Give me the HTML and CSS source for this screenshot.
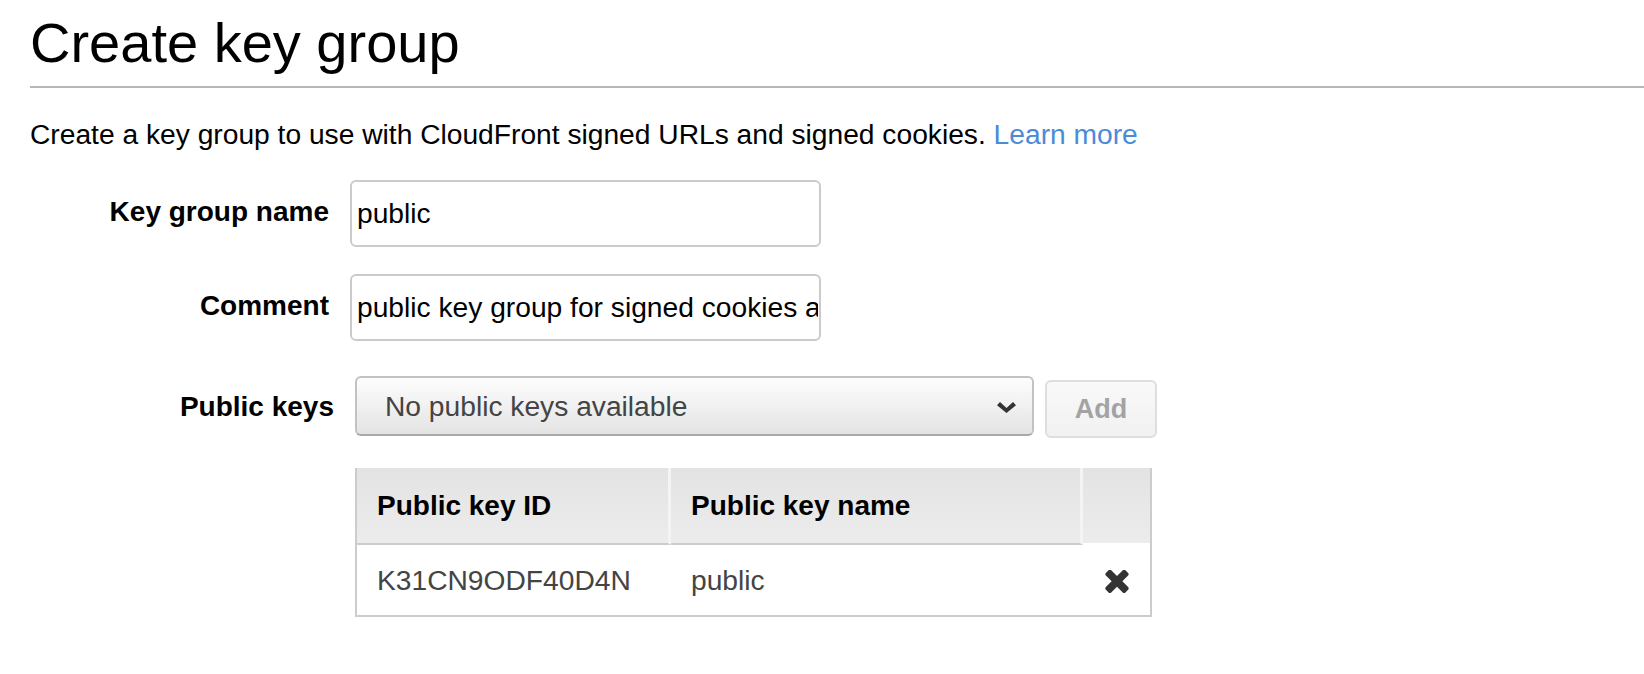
FILE: index.html
```html
<!DOCTYPE html>
<html lang="en">
<head>
<meta charset="utf-8">
<title>Create key group</title>
<link rel="stylesheet" href="styles.css">
</head>
<body>
<div class="page">
  <h1 class="title">Create key group</h1>
  <p class="intro">Create a key group to use with CloudFront signed URLs and signed cookies. <a class="link" href="#">Learn more</a></p>
  <div class="form">
    <div class="row">
      <label class="label">Key group name</label>
      <input class="input" type="text" value="public">
    </div>
    <div class="row row-comment">
      <label class="label">Comment</label>
      <input class="input" type="text" value="public key group for signed cookies and URLs">
    </div>
    <div class="row row-keys">
      <label class="label label-keys">Public keys</label>
      <div class="select">
        <span class="select-text">No public keys available</span>
        <svg class="chevron" width="19" height="11" viewBox="0 0 19 11"><path d="M0 3.2 L3 0 L9.5 6 L16 0 L19 3.2 L9.5 11 Z" fill="#333"/></svg>
      </div>
      <button class="btn-add" type="button" disabled>Add</button>
    </div>
    <div class="keys">
      <div class="keys-head">
        <div class="th th-id">Public key ID</div>
        <div class="th th-name">Public key name</div>
        <div class="th th-action"></div>
      </div>
      <div class="keys-row">
        <div class="td td-id">K31CN9ODF40D4N</div>
        <div class="td td-name">public</div>
        <div class="td td-action">
          <svg class="remove" width="24" height="23" viewBox="110 382 1188 1172"><path d="M1298 1322q0 40-28 68l-136 136q-28 28-68 28t-68-28l-294-294-294 294q-28 28-68 28t-68-28l-136-136q-28-28-28-68t28-68l294-294-294-294q-28-28-28-68t28-68l136-136q28-28 68-28t68 28l294 294 294-294q28-28 68-28t68 28l136 136q28 28 28 68t-28 68l-294 294 294 294q28 28 28 68z" fill="#333"/></svg>
        </div>
      </div>
    </div>
  </div>
</div>
</body>
</html>
```
FILE: styles.css
```css
html, body {
  margin: 0;
  padding: 0;
  background: #ffffff;
}

body {
  font-family: "Liberation Sans", Arial, Helvetica, sans-serif;
  color: #000;
}

.page {
  padding-left: 30px;
}

.title {
  margin: 0;
  padding: 11px 0 11px 0;
  font-size: 56px;
  line-height: 64px;
  font-weight: normal;
  color: #000;
  border-bottom: 2px solid #b7b7b7;
}

.intro {
  margin: 30px 0 0 0;
  font-size: 28.2px;
  line-height: 32px;
  color: #000;
}

.link {
  color: #4a8bd8;
  text-decoration: none;
}

.form {
  margin-top: 30px;
}

.row {
  display: flex;
  align-items: center;
}

.row-comment {
  margin-top: 27px;
}

.row-keys {
  margin-top: 35px;
  align-items: flex-start;
}

.label {
  flex: 0 0 299px;
  margin-right: 21px;
  text-align: right;
  font-size: 28px;
  line-height: 32px;
  font-weight: bold;
  padding-bottom: 3px;
}

.input {
  box-sizing: border-box;
  width: 471px;
  height: 67px;
  margin: 0;
  padding: 0 1px 0 5px;
  border: 2px solid #cbcbcb;
  border-radius: 6px;
  font-family: "Liberation Sans", Arial, Helvetica, sans-serif;
  font-size: 28.2px;
  color: #000;
  background: #fff;
  outline: none;
}

.label-keys {
  flex: 0 0 304px;
  margin-right: 21px;
  height: 60px;
  line-height: 62px;
  padding-bottom: 0;
}

.select {
  box-sizing: border-box;
  width: 679px;
  height: 60px;
  display: flex;
  align-items: center;
  justify-content: space-between;
  padding: 0 16px 0 28px;
  border: 2px solid #c2c2c2;
  border-bottom-color: #a9a9a9;
  border-radius: 6px;
  background: linear-gradient(#fdfdfd, #e4e4e4);
}

.select-text {
  font-size: 28.2px;
  line-height: 32px;
  color: #444;
}

.chevron {
  display: block;
  margin-top: 2px;
}

.btn-add {
  box-sizing: border-box;
  width: 112px;
  height: 58px;
  margin: 4px 0 0 11px;
  padding: 0;
  border: 2px solid #dedede;
  border-radius: 6px;
  background: linear-gradient(#f9f9f9, #f1f1f1);
  font-family: "Liberation Sans", Arial, Helvetica, sans-serif;
  font-size: 27px;
  font-weight: bold;
  color: #a3a3a3;
}

.keys {
  box-sizing: border-box;
  width: 797px;
  margin: 30px 0 0 325px;
  border: 2px solid #cccccc;
  border-top: none;
}

.keys-head {
  display: flex;
}

.th {
  box-sizing: border-box;
  height: 77px;
  display: flex;
  align-items: center;
  padding-left: 20px;
  font-size: 28px;
  line-height: 32px;
  font-weight: bold;
  color: #000;
  background: linear-gradient(#e3e3e3, #ececec);
  border-bottom: 2px solid #cccccc;
}

.th-id {
  width: 314px;
  border-right: 3px solid #f4f4f4;
}

.th-name {
  width: 412px;
  border-right: 3px solid #f4f4f4;
}

.th-action {
  flex: 1;
  border-bottom-color: #ffffff;
}

.keys-row {
  display: flex;
  height: 70px;
}

.td {
  box-sizing: border-box;
  display: flex;
  align-items: center;
  padding-left: 20px;
  font-size: 28.2px;
  line-height: 32px;
  color: #444;
}

.td-id {
  width: 314px;
}

.td-name {
  width: 412px;
}

.td-action {
  flex: 1;
  padding-left: 0;
  justify-content: center;
}

.remove {
  display: block;
  margin-top: 3px;
}
```
